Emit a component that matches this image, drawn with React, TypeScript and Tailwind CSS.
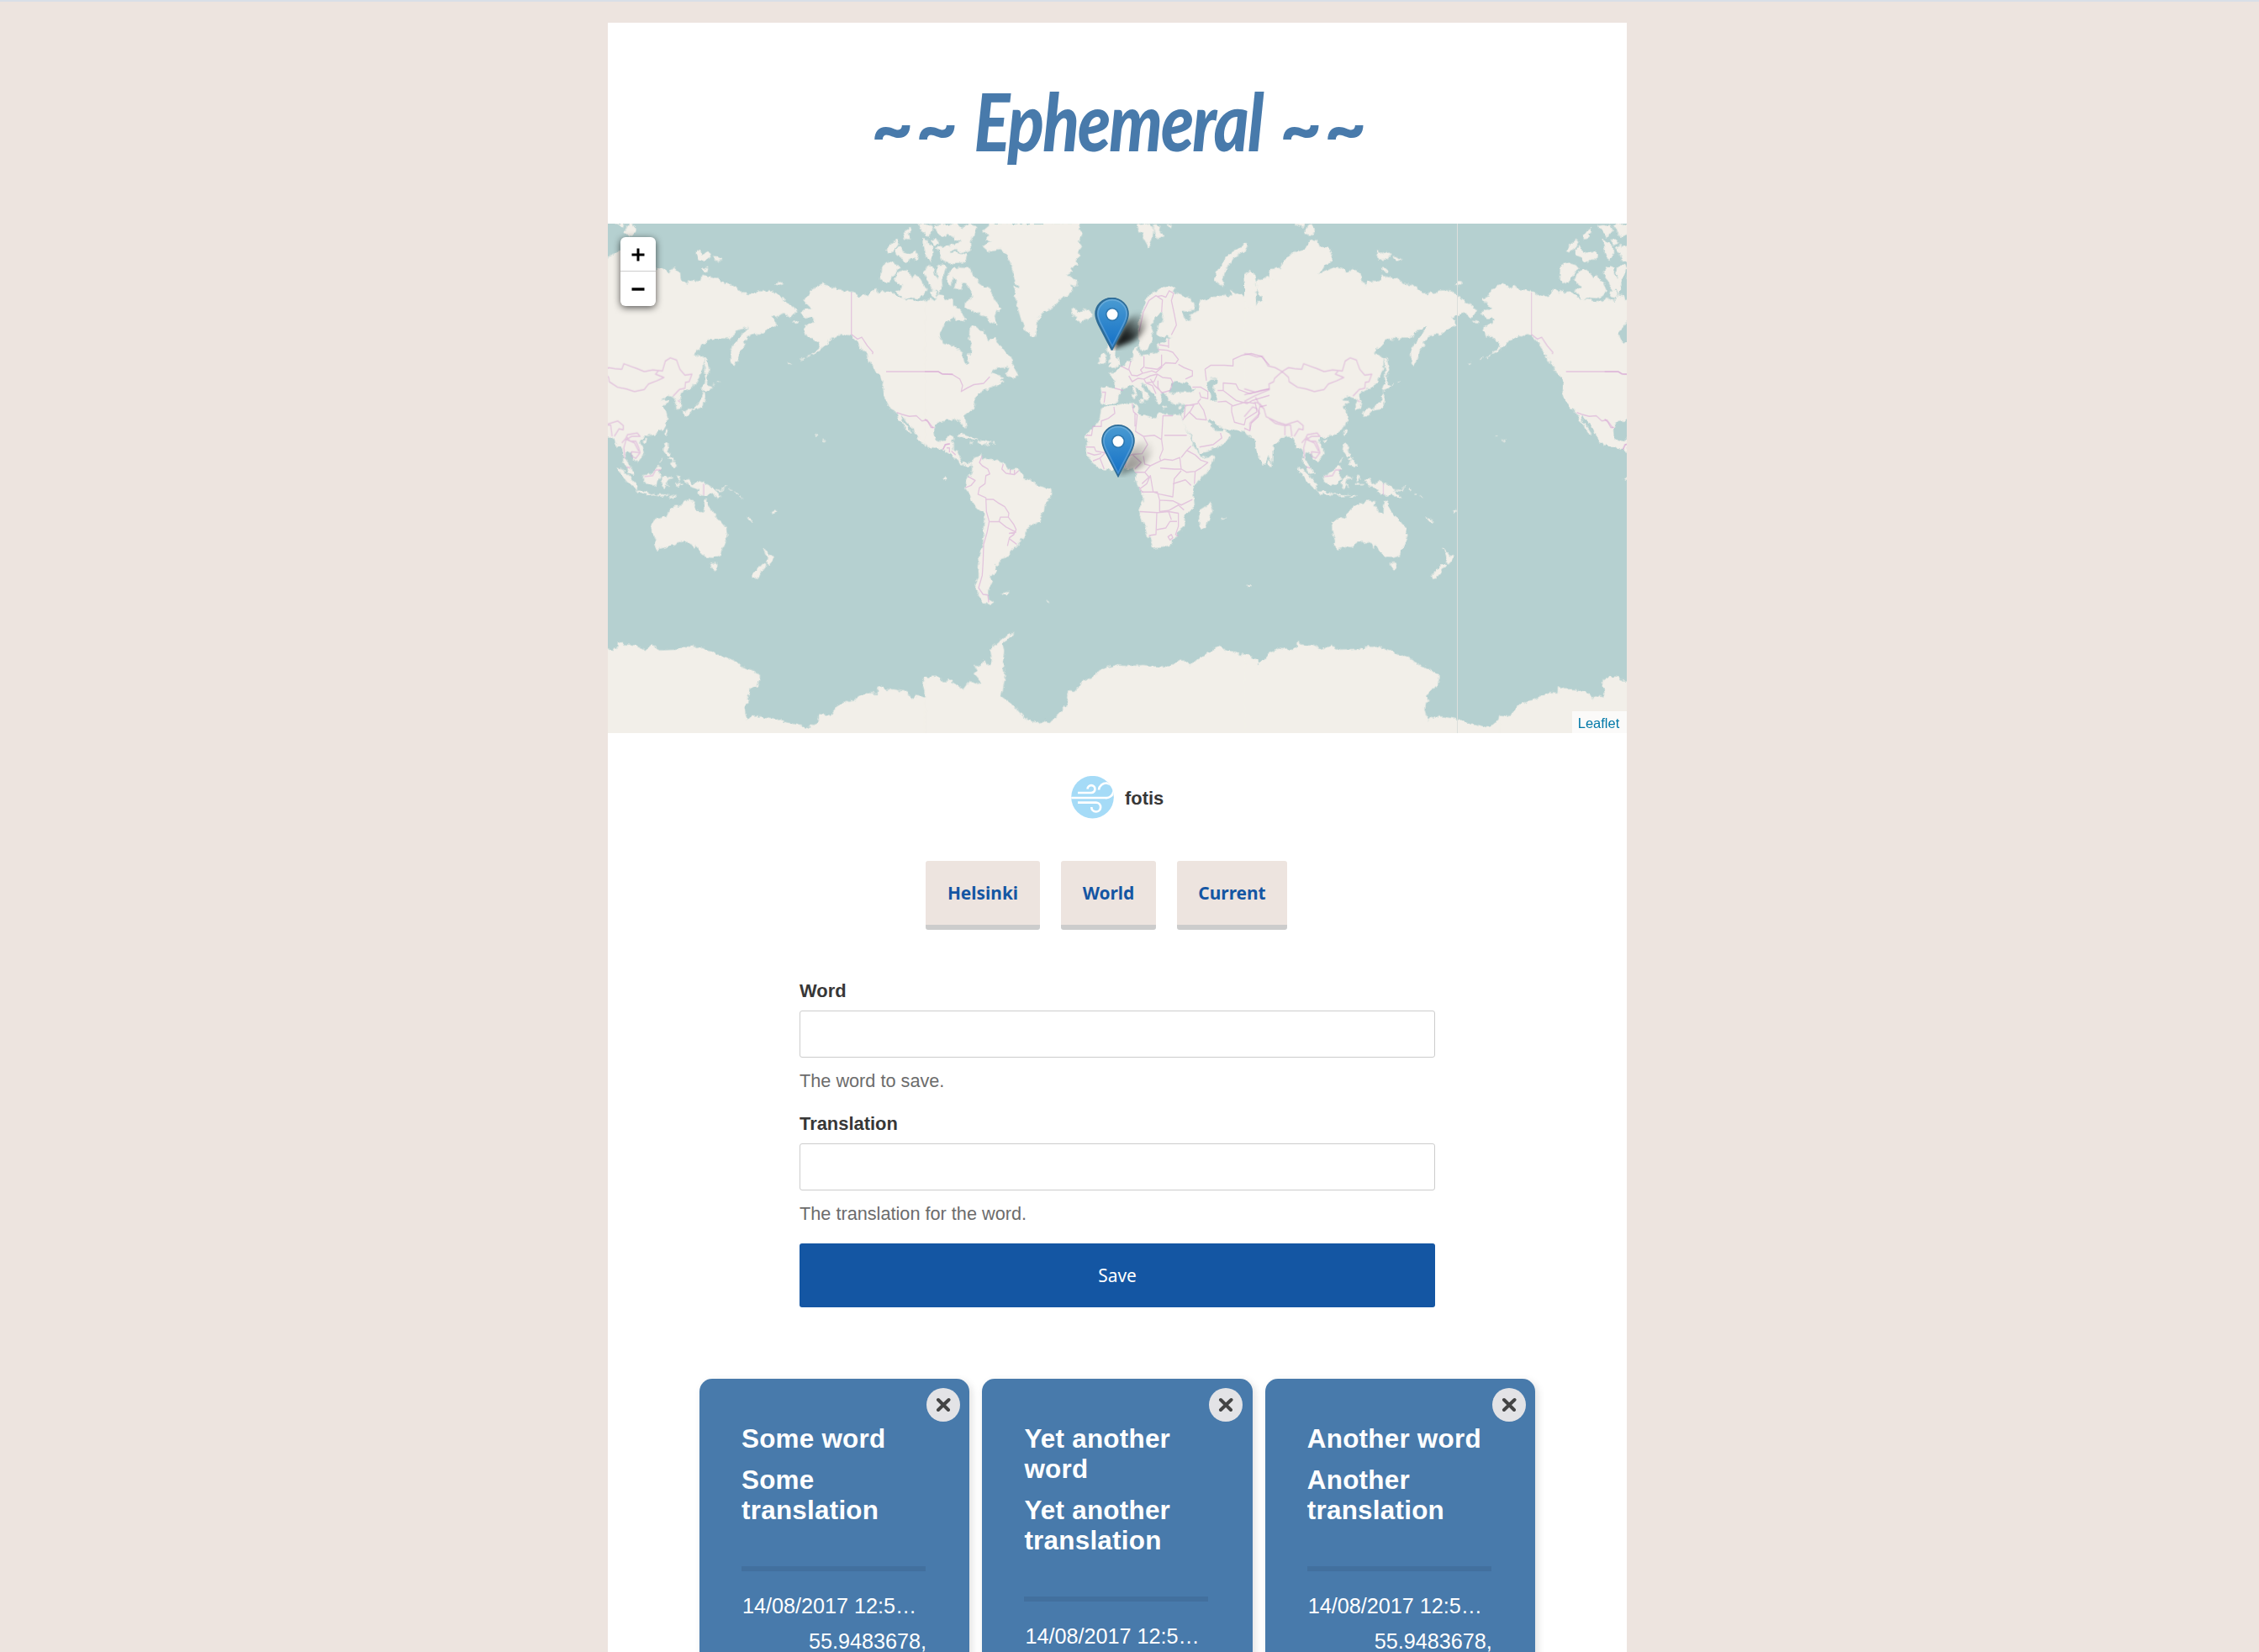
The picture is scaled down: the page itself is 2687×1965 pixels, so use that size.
import React from "react";

/* Coastlines, in three sheets that share one vertical scale. */
const AMERICA_WEST = [
  // Alaska, Canada and the west coast
  "M707 235L722 228L735 209L756 198L775 190L793 198L818 199L833 209L862 212L878 215L893 220L908 229L925 222L940 228L950 215L967 206L975 218L988 208L992 217L1018 213L1032 222L1047 234L1100 240L1128 245L1150 238L1168 247L1188 230L1200 242L1230 236L1240 236L1240 290L1222 300L1208 318L1190 335L1188 358L1203 375L1228 382L1240 382L1240 602L1212 604L1192 607L1177 619L1169 634L1170 655L1180 668L1197 675L1215 668L1222 655L1240 655L1240 706L1228 700L1205 695L1192 692L1162 686L1140 678L1117 668L1116 655L1102 640L1090 622L1075 606L1060 592L1054 590L1062 610L1078 626L1092 645L1088 647L1070 630L1062 612L1048 605L1040 582L1017 571L1003 548L993 530L989 512L992 487L985 468L968 460L960 445L950 432L940 415L930 400L915 385L905 372L892 358L878 347L860 344L840 343L830 350L815 355L800 360L788 374L770 386L752 399L735 405L752 394L768 380L764 370L747 360L738 352L718 349L708 325L718 316L742 307L745 293L722 293L698 278L715 266L740 267L725 255Z",
  // Arctic islands
  "M986 138L1000 128L1015 124L1040 130L1050 140L1035 155L1020 170L1010 188L995 185L982 175Z",
  "M1032 177L1042 158L1060 150L1078 147L1090 160L1098 172L1105 160L1122 170L1135 190L1145 208L1132 226L1110 232L1082 230L1060 235L1035 210L1055 205L1060 195Z",
  "M1003 88L1020 68L1042 52L1048 62L1030 85L1012 92Z",
  "M1035 88L1050 72L1060 90L1082 97L1105 90L1116 100L1112 114L1090 114L1075 124L1058 110L1040 104Z",
  "M1065 45L1072 28L1088 18L1092 28L1080 38L1085 50L1070 55Z",
  "M1115 10L1140 8L1158 30L1150 45L1135 30Z",
  "M1135 50L1150 65L1170 80L1165 100L1145 95L1138 75Z",
  "M1135 150L1158 135L1175 140L1170 160L1175 172L1160 185L1145 172Z",
  "M1185 135L1215 133L1210 160L1195 180L1200 205L1188 220L1180 200L1188 165Z",
  "M1172 12L1230 8L1225 35L1200 45L1185 30Z",
  "M1162 55L1180 50L1190 65L1175 70Z",
  "M1190 80L1230 75L1230 120L1205 120L1195 100Z",
  "M607 190L620 183L633 188L622 194Z",
  // Aleutians, Hawaii, Vancouver
  "M722 411L732 406L730 409L720 413Z",
  "M695 420L710 415L702 419Z",
  "M650 432L665 431L655 433Z",
  "M668 303L690 306L684 310Z",
  "M776 666L786 668L780 670Z",
  "M752 651L757 653L753 654Z",
  "M962 445L985 452L1000 462L995 468L975 458Z",
  "M1210 784L1218 786L1214 792Z",
  "M930 408L944 420L940 430Z",
];

const ATLANTIC = [
  // Eastern Canada and USA, Mexico, Central America
  "M0 242L18 235L40 245L48 222L65 225L80 262L75 278L92 300L70 295L55 318L48 340L62 370L100 380L132 400L140 428L150 438L157 430L155 410L165 398L170 372L158 358L162 325L175 315L195 330L210 333L218 350L228 365L250 350L265 375L280 392L300 410L312 428L305 442L262 445L245 452L235 462L258 470L284 475L262 488L240 502L218 512L195 522L178 535L178 556L172 571L140 592L145 608L148 630L137 622L122 604L105 602L80 604L50 605L35 615L29 633L32 655L45 672L70 672L78 660L102 658L95 678L82 690L92 696L118 700L126 712L122 730L140 737L165 738L160 745L145 742L125 738L105 720L88 708L68 698L45 690L0 683Z",
  "M290 460L303 440L315 435L322 455L332 470L328 478L305 472Z",
  "M232 497L262 487L280 490L250 502Z",
  // Arctic archipelago and Baffin
  "M85 155L100 142L125 140L160 142L170 158L188 180L205 192L232 208L245 232L272 265L255 275L248 290L255 315L235 305L215 285L180 275L145 262L148 245L170 230L165 208L150 190L135 182L125 205L105 208L112 180L98 165L95 195L82 180Z",
  "M98 255L112 262L125 275L138 288L145 300L125 298L108 305L105 290L92 280Z",
  "M45 135L78 138L70 155L60 178L62 195L50 185L42 160Z",
  "M0 10L22 8L30 25L20 38L0 35Z",
  "M45 10L65 8L75 35L60 45L42 30Z",
  "M78 8L115 10L130 22L155 8L182 15L180 35L160 60L165 85L140 92L110 85L80 88L70 75L110 70L130 58L105 50L85 35Z",
  "M80 98L110 92L135 97L150 100L145 122L105 125L80 122L68 108Z",
  "M38 80L62 72L58 88L45 90Z",
  "M0 75L28 72L30 100L22 120L5 110Z",
  "M5 140L28 138L35 165L50 180L45 205L30 210L15 190L10 165Z",
  "M20 210L38 212L45 232L28 228Z",
  "M105 260L125 268L120 280Z",
  // Greenland
  "M205 30L225 15L240 5L555 5L545 22L562 35L548 60L560 75L545 92L555 105L538 118L540 130L520 138L528 150L505 160L540 178L540 195L520 190L530 208L508 222L490 235L472 240L465 255L435 270L415 280L402 298L400 320L396 347L380 345L362 330L348 308L340 285L332 258L330 235L320 225L335 212L338 195L325 185L318 165L312 140L302 118L290 95L270 82L245 85L225 88L208 75L240 60L215 52L235 40Z",
  "M318 195L335 200L342 212L330 222L320 210Z",
  // Iceland
  "M525 270L540 265L550 275L575 266L590 272L595 285L580 297L560 305L538 300L545 290L528 285Z",
  // Caribbean
  "M118 652L138 648L160 655L186 666L170 667L150 658L125 656Z",
  "M186 676L205 668L225 672L235 676L215 680Z",
  "M160 676L170 677L165 680Z",
  "M240 676L250 677L244 680Z",
  // South America
  "M165 738L175 722L192 718L205 710L200 730L215 722L225 728L265 728L280 735L290 752L305 758L330 755L345 768L352 785L375 788L395 802L425 808L450 818L453 835L438 850L428 862L425 880L408 915L390 922L362 938L360 955L345 972L325 990L310 1005L298 1022L270 1030L265 1048L250 1048L248 1058L255 1065L240 1078L230 1088L245 1098L235 1110L222 1125L222 1138L228 1155L245 1163L232 1170L210 1160L195 1145L185 1128L180 1105L190 1085L190 1050L200 1010L208 980L212 950L215 915L214 890L195 880L180 868L165 840L150 822L140 812L150 790L158 778L168 765L170 750Z",
  "M276 1132L298 1132L290 1139L278 1136Z",
  "M432 1156L445 1163L438 1160Z",
  "M68 786L80 784L76 792Z",
  // British Isles
  "M650 385L655 372L690 378L680 392L678 405L688 415L695 430L690 442L662 445L655 440L668 432L655 425L664 418L658 400Z",
  "M622 412L638 400L648 408L645 425L635 434L618 432L625 424Z",
  // Europe, Africa, western Asia
  "M628 505L660 508L678 507L678 485L672 475L655 462L680 460L695 448L712 438L728 428L745 415L745 392L758 380L762 398L770 408L800 405L835 400L835 385L832 372L848 368L870 356L888 348L848 352L830 348L832 335L830 320L848 305L856 292L850 278L835 278L822 292L812 305L805 318L812 340L812 360L800 378L790 392L775 393L765 375L762 340L765 305L775 270L790 250L785 240L815 215L835 205L850 202L875 195L895 205L880 212L905 222L940 232L965 252L960 268L930 270L922 278L935 298L945 290L968 272L982 268L980 255L985 235L1005 240L1020 232L1045 232L1075 225L1100 225L1090 208L1140 230L1150 262L1175 265L1190 248L1210 240L1198 225L1185 200L1190 175L1215 185L1230 165L1240 165L1240 735L1225 712L1215 735L1205 738L1192 712L1182 688L1180 668L1168 648L1150 640L1120 636L1075 632L1062 628L1040 618L1015 600L1008 608L1025 625L1040 640L1065 640L1068 632L1088 652L1080 668L1060 680L1035 692L982 708L975 690L955 665L935 635L920 612L920 590L930 560L915 556L885 556L868 545L862 525L895 520L920 518L965 520L945 512L920 490L895 488L885 500L875 515L872 525L845 522L840 528L848 545L838 556L825 540L815 525L800 508L785 500L770 490L772 500L785 515L798 528L802 535L790 545L782 538L775 520L755 505L742 495L728 502L708 508L700 518L688 530L685 548L665 555L645 558L628 552L626 540L632 528Z",
  "M630 570L650 565L680 562L710 555L750 554L762 565L760 585L775 590L810 600L830 600L835 585L885 592L915 590L918 610L930 630L945 660L960 685L975 705L988 722L1032 715L1025 735L1010 760L975 790L955 812L958 835L962 870L935 892L920 902L927 928L910 940L895 965L875 985L855 993L815 997L808 975L795 955L785 925L768 890L768 875L780 850L775 825L765 812L750 790L755 765L740 752L720 755L712 742L680 755L640 758L615 748L590 728L575 705L580 680L575 658L590 635L605 622L625 600Z",
  // Madagascar
  "M980 885L1000 875L1018 856L1026 868L1018 895L1000 935L985 935L980 915Z",
  // Mediterranean islands
  "M743 505L750 503L753 520L745 522Z",
  "M742 525L754 523L752 540L744 540Z",
  "M765 545L782 540L780 553L768 550Z",
  "M848 565L865 567L850 570Z",
  "M905 567L918 562L912 572Z",
  // Svalbard and Novaya Zemlya
  "M760 10L800 6L815 22L812 45L800 78L785 55L778 35L765 30Z",
  "M818 8L840 10L835 25L850 42L832 52L820 30Z",
  "M865 12L880 10L878 18Z",
  "M1035 178L1042 155L1060 130L1075 108L1100 90L1125 80L1145 66L1152 75L1135 90L1105 105L1090 125L1070 148L1060 175L1070 198L1050 190Z",
  "M1058 905L1076 904L1062 909Z",
  "M1148 1110L1162 1112L1152 1117Z",
  "M1140 175L1158 150L1175 160L1185 200L1178 235L1185 262L1165 268L1150 240Z",
];

const ASIA = [
  "M0 160L20 152L35 160L38 185L35 215L42 240L30 262L18 265L0 262Z",
  "M0 265L40 262L48 245L75 248L68 228L55 222L52 200L42 185L60 178L80 165L105 180L90 165L95 145L130 140L150 110L180 95L215 85L240 52L262 60L270 75L300 75L312 95L308 120L290 135L258 158L290 150L315 140L345 143L375 158L385 142L412 155L415 178L435 192L440 180L485 182L490 165L520 170L550 175L570 190L600 192L625 208L635 218L680 220L695 210L735 210L760 225L785 240L810 255L830 270L822 280L810 292L795 285L780 275L770 280L762 288L735 290L752 300L756 316L730 325L700 343L680 342L655 350L640 365L645 375L625 395L620 415L605 440L597 428L595 395L605 375L625 355L650 325L655 318L635 325L620 330L590 355L540 355L508 360L485 380L460 405L480 408L497 415L495 445L480 475L455 508L435 510L415 520L410 540L418 560L415 570L400 572L398 555L402 542L385 535L370 530L350 542L340 545L372 548L350 565L362 580L368 605L352 632L325 648L290 655L272 660L265 672L280 690L282 712L262 732L248 722L232 702L222 700L215 722L228 740L240 755L248 772L232 768L222 750L210 735L212 700L200 688L188 690L180 668L162 655L135 658L115 675L88 692L85 712L72 738L62 730L48 700L38 665L28 660L15 652L0 636Z",
  "M85 728L95 735L97 748L87 746Z",
  "M278 668L295 663L288 676Z",
  "M355 650L362 633L368 638L360 654Z",
  // Severnaya Zemlya and other northern islands
  "M215 35L225 15L235 5L250 15L255 32L240 40Z",
  "M470 98L480 88L490 100L510 90L522 98L515 112L495 115L478 116Z",
  "M530 105L545 106L562 116L545 118Z",
  "M492 142L505 140L514 148L500 152Z",
  "M0 70L10 70L8 80L0 88Z",
  "M180 6L215 6L210 16Z",
  // Japan and Sakhalin
  "M500 415L508 415L516 455L508 465L510 488L503 488L503 455Z",
  "M497 500L505 488L512 498L525 503L505 515L492 518Z",
  "M495 522L502 530L498 552L495 565L475 570L455 575L435 592L428 595L423 580L440 572L460 572L478 555L490 545Z",
  "M530 500L536 496L532 499Z",
  "M548 490L556 486L550 490Z",
  // Philippines, Indonesia, New Guinea
  "M358 675L368 678L370 690L365 702L378 708L378 714L366 714L355 700Z",
  "M378 718L388 724L384 730L372 724Z",
  "M382 732L392 732L400 742L392 750L375 742Z",
  "M340 735L350 722L344 732Z",
  "M190 752L208 758L225 770L245 788L262 805L258 818L242 808L225 792L205 770Z",
  "M258 822L275 822L310 830L325 835L345 833L378 835L345 838L300 832L265 828Z",
  "M282 775L305 770L320 760L332 745L348 752L335 760L345 780L335 792L330 802L310 805L288 798L282 785Z",
  "M350 782L370 780L388 782L365 786L360 795L375 812L362 800L358 815L350 810L348 795Z",
  "M375 843L400 834L392 842Z",
  "M425 790L445 787L455 802L470 798L480 792L500 800L525 810L540 825L560 842L545 842L530 830L510 835L490 835L475 828L482 820L465 812L450 808L440 798Z",
  "M540 818L560 820L578 808L565 820L550 822Z",
  "M395 800L425 803L400 805Z",
  "M404 772L412 780L406 796Z",
  "M588 818L596 822L592 823Z",
  "M606 827L616 833L610 832Z",
  "M624 836L636 845L628 841Z",
  "M650 903L662 908L672 915L660 914Z",
  "M740 888L755 880L758 884L745 892Z",
  // Australia and New Zealand
  "M313 918L330 908L365 902L370 888L390 870L410 868L428 855L445 852L465 855L460 870L478 882L497 888L502 850L508 852L515 870L530 892L550 910L575 935L582 958L570 985L560 1002L555 1018L530 1025L510 1024L490 1018L478 998L470 988L462 998L455 985L430 976L405 978L380 990L352 995L330 1000L322 990L325 975L315 945Z",
  "M522 1042L545 1042L545 1055L535 1064L527 1058Z",
  "M710 996L722 1008L732 1020L748 1022L740 1035L728 1046L720 1040L725 1028Z",
  "M708 1045L720 1048L705 1065L690 1085L672 1088L670 1080L690 1062Z",
];

/* Inland waters drawn back over the land. */
const LAKES_ATLANTIC = [
  "M1005 490L1020 480L1045 478L1045 488L1028 500L1035 520L1045 535L1040 552L1022 545L1015 520L1005 505Z",
  "M875 515L880 495L895 485L920 492L935 485L942 498L965 512L945 520L900 520Z",
  "M930 270L935 285L950 290L945 305L930 295L918 275Z",
  "M740 565L748 558L752 565L745 570Z",
];

const ANTARCTICA = {
  west: "M505 1525L520 1512L530 1515L560 1512L600 1518L640 1530L690 1538L725 1548L762 1522L765 1505L805 1508L835 1475L865 1465L885 1462L910 1450L945 1440L972 1442L975 1418L995 1428L1040 1430L1078 1438L1098 1460L1105 1448L1145 1455L1140 1430L1132 1420L1135 1398L1160 1390L1182 1390L1195 1402L1240 1403L1240 1600L505 1600Z",
  middle: "M0 1392L40 1392L52 1402L90 1405L138 1428L160 1402L195 1413L205 1410L175 1380L188 1372L178 1355L200 1358L210 1340L225 1355L240 1340L235 1305L262 1285L300 1258L318 1258L298 1272L275 1285L282 1310L278 1345L284 1400L272 1450L310 1475L330 1492L360 1520L395 1530L425 1526L445 1533L480 1500L498 1485L510 1468L515 1432L540 1435L560 1408L600 1390L625 1370L680 1355L720 1358L780 1355L850 1362L890 1350L912 1338L950 1355L975 1335L1025 1312L1045 1295L1065 1302L1075 1312L1155 1325L1190 1354L1205 1340L1240 1325L1240 1600L0 1600Z",
  east: "M0 1322L15 1325L45 1338L48 1355L70 1342L85 1325L120 1302L170 1306L190 1300L192 1284L215 1292L245 1293L285 1308L308 1293L345 1310L410 1308L430 1298L480 1300L525 1312L545 1325L575 1330L615 1345L632 1360L670 1370L697 1388L688 1418L665 1428L650 1450L660 1464L645 1470L642 1490L650 1520L660 1526L668 1512L700 1513L760 1522L790 1530L875 1547L910 1520L910 1600L0 1600Z",
};

const BORDERS_WEST =
  "M878 215V343L900 358L915 352L935 378L955 398L953 404M1002 457H1188L1205 465H1240M1040 582L1060 588L1085 594L1110 592L1130 608L1148 605L1168 628H1175M1205 695L1212 680L1228 678M1218 690L1228 690V704";
const BORDERS_ATLANTIC =
  "M0 457H48L60 464L98 466L125 480L135 500L130 518L150 508L175 497L210 493L232 473M0 602L12 612L22 628H30M65 695L75 680L90 678M95 700L110 712M205 715L195 735L205 745L225 755L232 770L218 775L215 800L195 812L190 832L218 843L220 885L230 915L222 950L210 985L208 1040L205 1080L192 1118L208 1138L225 1140L228 1162M145 812L165 805L180 790L155 778M280 740L275 755L290 768L320 772L335 760M305 755V770M320 758V772M220 848H245L265 860L285 870L300 890L298 902H270L265 915L232 916M265 915L290 932L325 948L300 952M298 902L318 925L326 940L318 955L302 965L295 990M302 968L328 985M632 520H645L640 552M678 508L708 515M700 440L728 452M735 425L728 450L738 468L758 470L778 462L770 452L782 442V410M845 405V440L830 450L785 445M780 462L810 455L825 460L848 442M728 470L740 488L760 478L782 480L805 470L830 465L848 475L878 478L885 490L875 515L845 522L832 505V485M782 480L790 492L812 500L825 525M790 492L818 488L830 465M805 480L820 500L845 520M848 440L860 430L895 432L905 420L885 398L865 392L832 390M905 435L925 445L955 455V470L930 480M870 385V358M835 375L872 380M765 335L780 275L800 240L825 225L848 238L845 275M828 228L845 225L860 230L872 210L888 218L880 240L890 280L898 315L880 345M1000 450L1020 438L1070 438L1100 440L1100 420L1130 408L1165 402L1200 410L1230 438M1000 450L1005 485M955 505H985L1010 518V540L985 535L980 520M1045 515H1065V492L1110 495L1120 512L1160 525L1200 515L1230 510M1065 515L1110 545L1150 555L1170 545L1230 530M1045 550L1075 548L1100 562L1145 550L1180 555L1185 580L1145 602L1140 620L1105 612L1095 580V562M1140 630L1160 638L1165 615L1190 595L1195 565L1220 560M985 540L975 550L995 575L1005 605L970 602L945 582L960 560L930 560M920 605L945 580M975 555L930 562L925 600M980 688L1030 680L1060 660L1055 645M675 565L678 585L655 600L630 608L630 625L600 625L595 652H575M740 555L745 580L758 590L752 640L780 655L820 652L845 665L850 592H885M855 652H935M750 585L750 625M780 655L795 680L775 708L740 710L720 720M845 665L850 695L838 720L842 730L805 745L785 740L780 715M842 730L855 725L885 728L910 720L915 755H890L840 752M575 688H605L610 700L640 705L660 695M580 705L605 712L630 708M600 730L625 722L640 755M625 722L650 700M720 720L715 750M740 710L772 735L750 755M750 765L785 765L805 745M785 765L800 780L775 800M768 815L792 800L805 775L815 825L840 832L885 840L890 785L915 760M765 810L775 825H830L838 850L885 852L915 865L955 848M885 800L930 788L950 805M838 850V885L870 882L905 865L925 880M768 885L830 888L870 885L905 890L905 930L895 955L905 960M828 888L825 955L800 958M828 940L860 935L875 915L900 915M870 885L880 910M868 962L880 955L885 965L875 972ZM915 755L935 765L965 762L985 752L1010 735L985 728L965 712L935 698L915 720M965 762L962 800M935 698L950 685";
const BORDERS_ASIA =
  "M0 402L20 405L45 412L65 410L85 440L110 445L135 457L158 445L180 448L205 450L212 433L240 442L260 448L285 457L315 452L350 455L360 425L378 415L400 422L412 450L430 468L455 465L445 488L432 490L430 508L410 512L388 532M135 457L158 475L160 488L190 505L220 510L250 518L285 512L300 495L330 485L355 475L325 465L335 455M135 457L108 478L105 488L88 495L90 512L40 530L0 548M0 510L40 520L88 510M0 528L35 520M35 550L55 555L70 570L78 595L120 612L145 618V652M88 600L110 615L145 622L165 620L170 655M145 620L190 608L210 622V635L195 632L178 655M0 595L30 565L45 570L55 585L20 615V635M40 535L55 560L72 572M205 675L220 660L225 650L260 645L270 655L240 655L220 665L212 690L215 722M220 655L235 670L255 670L265 690L270 705L240 702L238 715L255 722L270 705M222 665L250 675L265 700M285 778L315 775L325 758H345M497 800V835M405 545L412 550M222 748L235 752";

const Marker = ({ className }: { className: string }) => (
  <svg viewBox="0 0 26 41" className={className} preserveAspectRatio="none">
    <path
      d="M13 .6C6 .6 .7 6 .7 12.6C.7 15.7 1.9 18.5 3.2 21L13 40L22.8 21C24.1 18.5 25.3 15.7 25.3 12.6C25.3 6 20 .6 13 .6Z"
      fill="url(#pin)"
      stroke="#2e6c97"
      strokeWidth="1.1"
    />
    <path
      d="M13 1.8C6.9 1.8 1.9 6.6 1.9 12.6C1.9 15.5 3 18 4.3 20.5L13 37.5L21.7 20.5C23 18 24.1 15.5 24.1 12.6C24.1 6.6 19.1 1.8 13 1.8Z"
      fill="none"
      stroke="#fff"
      strokeOpacity=".18"
      strokeWidth="1.1"
    />
    <circle cx="13" cy="13" r="5.2" fill="#2e78b0" />
    <circle cx="13" cy="13" r="4.2" fill="#fff" />
  </svg>
);

const Shadow = ({ className }: { className: string }) => (
  <svg viewBox="0 0 66 66" className={className}>
    <path d="M0 64L14 36C20 24 34 18 40 26C45 34 37 48 22 56Z" fill="url(#shade)" filter="url(#soft)" />
  </svg>
);

function World() {
  return (
    <svg viewBox="9 5 3636 1557" preserveAspectRatio="none" className="block h-full w-full">
      <defs>
        <linearGradient id="pin" x1="0" y1="0" x2="0" y2="1">
          <stop offset="0" stopColor="#4a9bd2" />
          <stop offset="1" stopColor="#126fc6" />
        </linearGradient>
        <linearGradient id="shade" x1="0" y1="1" x2=".85" y2=".1">
          <stop offset="0" stopColor="#000" stopOpacity="1" />
          <stop offset=".5" stopColor="#000" stopOpacity=".8" />
          <stop offset="1" stopColor="#000" stopOpacity=".1" />
        </linearGradient>
        <filter id="soft" x="-30%" y="-30%" width="160%" height="160%">
          <feGaussianBlur stdDeviation="3" />
        </filter>
        <filter id="rough" filterUnits="userSpaceOnUse" x="-100" y="-20" width="4000" height="1660">
          <feTurbulence type="fractalNoise" baseFrequency="0.05" numOctaves="3" seed="4" result="noise" />
          <feDisplacementMap in="SourceGraphic" in2="noise" scale="17" xChannelSelector="R" yChannelSelector="G" />
        </filter>
        <g id="world-land">
          <g fill="#f2efe9" stroke="#f2efe9" strokeWidth="2" strokeLinejoin="round">
            <path d={AMERICA_WEST.join("") + ANTARCTICA.west} />
            <g transform="translate(1140 0)">
              {ATLANTIC.map((d) => (
                <path key={d} d={d} />
              ))}
              <path d={ANTARCTICA.middle} />
            </g>
            <g transform="translate(2280 0)">
              {ASIA.map((d) => (
                <path key={d} d={d} />
              ))}
              <path d={ANTARCTICA.east} />
            </g>
          </g>
          <path transform="translate(1140 0)" d={LAKES_ATLANTIC.join("")} fill="#b5d0d0" />
        </g>
        <g id="world-borders" fill="none" stroke="#d9a9d6" strokeOpacity=".6" strokeWidth="3.8" strokeLinejoin="round">
          <path d={BORDERS_WEST} />
          <path transform="translate(1140 0)" d={BORDERS_ATLANTIC} />
          <path transform="translate(2280 0)" d={BORDERS_ASIA} />
        </g>
      </defs>
      <rect width="3700" height="1600" fill="#b5d0d0" />
      <g filter="url(#rough)">
        <use href="#world-land" x="-2426" />
        <use href="#world-land" x="2426" />
        <use href="#world-land" />
      </g>
      <use href="#world-borders" x="-2426" />
      <use href="#world-borders" x="2426" />
      <use href="#world-borders" />
      <path d="M3040.5 0V1600" stroke="#dcdfdc" strokeWidth="3" />
    </svg>
  );
}

function WindAvatar() {
  return (
    <svg viewBox="0 0 51 51" className="h-[51px] w-[51px]">
      <defs>
        <clipPath id="disc">
          <circle cx="25.5" cy="25.2" r="25.3" />
        </clipPath>
      </defs>
      <g clipPath="url(#disc)">
        <rect width="51" height="51" fill="#a5dbf7" />
        <g fill="none" stroke="#fff" strokeWidth="2.7">
          <path d="M0 26H40.5A8.8 8.8 0 1 0 33 16.5" />
          <path d="M8 20H24A4.4 4.4 0 1 0 19.6 15.5" />
          <path d="M8 31.7H30A5.4 5.4 0 1 1 24.3 37" />
        </g>
      </g>
    </svg>
  );
}

const FIELDS = [
  { label: "Word", help: "The word to save." },
  { label: "Translation", help: "The translation for the word." },
];

const CARDS = [
  { word: "Some word", translation: "Some translation" },
  { word: "Yet another word", translation: "Yet another translation" },
  { word: "Another word", translation: "Another translation" },
];

const JUMPS = [
  { name: "Helsinki", size: "w-[136px]" },
  { name: "World", size: "w-[113px]" },
  { name: "Current", size: "w-[131px]" },
];

export default function App() {
  return (
    <div className="h-[1965px] overflow-hidden border-t-2 border-[#d9dfe8] bg-[#ede4df] pt-[25px] font-['Liberation_Sans',Arial,sans-serif] text-[#373737]">
      <main className="ml-[723px] h-[2100px] w-[1212px] bg-white">
        <h1 className="flex h-[239px] items-start justify-center whitespace-nowrap pt-[81px] font-[Lato,cursive] text-[80px] leading-[80px] font-black text-[#487aab] italic">
          <span className="w-[122px] pt-0.5 text-[86px] tracking-[3px]">~~</span>
          <span className="w-[364px] origin-[50%_80%] scale-y-[1.18] tracking-[-1.9px]">Ephemeral</span>
          <span className="w-[99px] pt-0.5 text-[86px] tracking-[3px]">~~</span>
        </h1>

        <section className="relative h-[606px] overflow-hidden">
          <World />
          <div className="absolute top-[16px] left-[15px] flex h-[82px] w-[42px] flex-col rounded-[6px] bg-white shadow-[0_2px_8px_rgba(0,0,0,0.65)]">
            <button className="flex h-[41px] items-center justify-center border-b border-[#ccc]">
              <svg viewBox="0 0 16 16" className="mt-0.5 h-4 w-4">
                <path d="M0.5 8H15.5M8 0.5V15.5" stroke="#000" strokeWidth="3" />
              </svg>
            </button>
            <button className="flex h-[41px] items-center justify-center">
              <svg viewBox="0 0 16 16" className="h-4 w-4">
                <path d="M0.5 8H15.5" stroke="#000" strokeWidth="3.4" />
              </svg>
            </button>
          </div>
          <Shadow className="absolute top-[85px] left-[600px] h-[66px] w-[66px]" />
          <Shadow className="absolute top-[236px] left-[607px] h-[66px] w-[66px] opacity-40" />
          <Marker className="absolute top-[88px] left-[579px] h-[63px] w-[40px]" />
          <Marker className="absolute top-[88px] left-[580px] h-[63px] w-[40px]" />
          <Marker className="absolute top-[239px] left-[587px] h-[63px] w-[40px]" />
          <div className="absolute right-0 bottom-0 flex h-[26px] w-[65px] items-center justify-center bg-white/70 pt-0.5 pr-0.5 text-[16.5px] text-[#0078a8]">
            Leaflet
          </div>
        </section>

        <div className="flex h-[152px] items-start pt-[51px] pl-[551px]">
          <WindAvatar />
          <b className="ml-[13px] pt-[13px] text-[21.9px] leading-7">fotis</b>
        </div>

        <nav className="flex gap-[25px] pl-[378px] font-['Noto_Sans',sans-serif] text-[20.9px] font-bold text-[#1456a3]">
          {JUMPS.map(({ name, size }) => (
            <button
              key={name}
              className={`${size} h-[82px] rounded-[3px] border-b-[6px] border-[#ccc] bg-[#ede4df] pt-0.5`}
            >
              {name}
            </button>
          ))}
        </nav>

        <form className="mx-auto w-[756px] pt-[58px] text-[21.7px]">
          {FIELDS.map(({ label, help }) => (
            <label key={label} className="block h-[158px]">
              <b className="block h-[38px] text-[21.9px] leading-[29px]">{label}</b>
              <input className="block h-[56px] w-full rounded-[3px] border border-[#ccc] bg-white" />
              <span className="block pt-[14px] leading-[28px] text-[#6c6c6c]">{help}</span>
            </label>
          ))}
          <button
            type="button"
            className="mt-[-1px] block h-[76px] w-full rounded-[3px] bg-[#1456a3] pt-0.5 font-['Noto_Sans',sans-serif] text-[20.9px] text-white"
          >
            Save
          </button>
        </form>

        <section className="mt-[85px] flex gap-[15px] pl-[109px]">
          {CARDS.map(({ word, translation }) => (
            <article
              key={word}
              className="relative h-[460px] w-[321.4px] rounded-[15px] bg-[#487aab] px-[50px] pt-[54px] text-white shadow-[3px_3px_10px_rgba(0,0,0,0.12)]"
            >
              <button className="absolute top-[11px] right-[11.4px] flex h-10 w-10 items-center justify-center rounded-full bg-[#e3e3e6]">
                <svg viewBox="0 0 18 18" className="h-[18px] w-[18px]">
                  <path d="M3 3L15 15M15.5 3L3 15" stroke="#444" strokeWidth="4" strokeLinecap="round" />
                </svg>
              </button>
              <h2 className="mb-[13px] text-[31.4px] leading-9 font-bold tracking-[0.25px]">{word}</h2>
              <h2 className="text-[31.4px] leading-9 font-bold tracking-[0.25px]">{translation}</h2>
              <hr className="mt-[48px] h-0 w-[219px] border-0 border-t-[6px] border-[#42709e]" />
              <p className="mt-[20px] pl-px text-[25.2px] leading-[42px]">14/08/2017 12:5…</p>
              <p className="w-[220px] text-right text-[25.2px] leading-[42px]">55.9483678,</p>
            </article>
          ))}
        </section>
      </main>
    </div>
  );
}
